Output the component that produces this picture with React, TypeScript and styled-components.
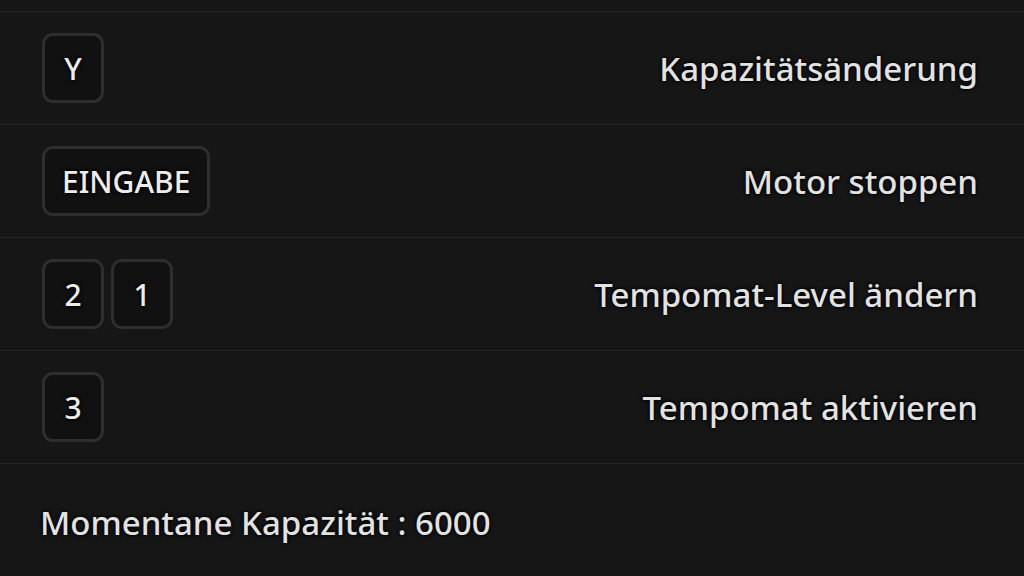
import React from "react";
import styled, { createGlobalStyle } from "styled-components";

const Global = createGlobalStyle`
  html, body {
    margin: 0;
    padding: 0;
    background: #161617;
    overflow: hidden;
  }
  body {
    font-family: "Noto Sans", "Open Sans", sans-serif;
    color: #dcdcdc;
  }
`;

const Page = styled.div`
  width: 1024px;
  height: 576px;
  background: #161617;
  padding-top: 11px;
  box-sizing: border-box;
`;

const List = styled.div`
  display: flex;
  flex-direction: column;
  border-bottom: 1px solid #252527;
`;

const Row = styled.div`
  height: 113px;
  box-sizing: border-box;
  border-top: 1px solid #252527;
  display: flex;
  align-items: center;
  padding: 0 46px 0 42px;
`;

const Keys = styled.div`
  display: flex;
  gap: 7px;
`;

const Kbd = styled.span`
  min-width: 62px;
  height: 70px;
  box-sizing: border-box;
  border: 3px solid #2e2e30;
  border-radius: 11px;
  background: #111112;
  padding: 0 17px;
  display: flex;
  align-items: center;
  justify-content: center;
  font-size: 30px;
  font-weight: 500;
  color: #ececec;
  text-shadow: 0 0 1px #000, 0 0 3px #000, 0 0 4px #000;
`;

const Label = styled.span`
  margin-left: auto;
  font-size: 33px;
  font-weight: 500;
  color: #e2e2e2;
  text-shadow: 0 0 1px #000, 0 0 3px #000, 0 0 4px #000;
`;

const Footer = styled.div`
  padding: 36px 40px 0;
  font-size: 33px;
  font-weight: 500;
  color: #e2e2e2;
  text-shadow: 0 0 1px #000, 0 0 3px #000, 0 0 4px #000;
`;

const rows: { keys: string[]; label: string }[] = [
  { keys: ["Y"], label: "Kapazitätsänderung" },
  { keys: ["EINGABE"], label: "Motor stoppen" },
  { keys: ["2", "1"], label: "Tempomat-Level ändern" },
  { keys: ["3"], label: "Tempomat aktivieren" },
];

export default function App() {
  return (
    <Page>
      <Global />
      <List>
        {rows.map((r) => (
          <Row key={r.label}>
            <Keys>
              {r.keys.map((k) => (
                <Kbd key={k}>{k}</Kbd>
              ))}
            </Keys>
            <Label>{r.label}</Label>
          </Row>
        ))}
      </List>
      <Footer>Momentane Kapazität : 6000</Footer>
    </Page>
  );
}
